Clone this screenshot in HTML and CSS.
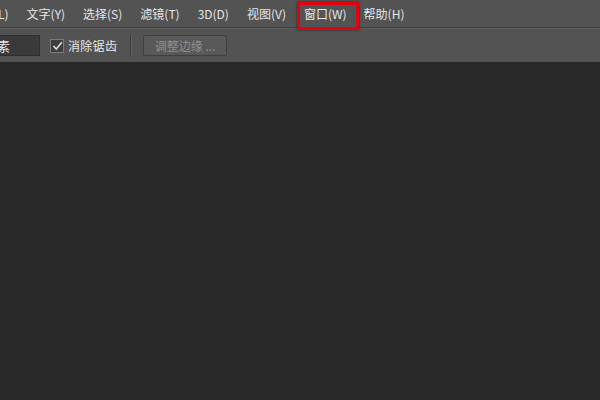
FILE: index.html
```html
<!DOCTYPE html>
<html lang="zh">
<head>
  <meta charset="UTF-8">
  <title>窗口菜单</title>
  <link rel="stylesheet" href="styles.css">
</head>
<body>
  <div class="menubar">
    <span class="menu-item first">L)</span>
    <span class="menu-item">文字(Y)</span>
    <span class="menu-item">选择(S)</span>
    <span class="menu-item">滤镜(T)</span>
    <span class="menu-item">3D(D)</span>
    <span class="menu-item">视图(V)</span>
    <span class="menu-item marked">窗口(W)</span>
    <span class="menu-item after-mark">帮助(H)</span>
  </div>

  <div class="toolbar">
    <div class="field">素</div>
    <label class="check">
      <span class="box">
        <svg width="11" height="10" viewBox="0 0 11 10"><path d="M1.5 5 L4.3 8 L9.8 1.2" fill="none" stroke="#dcdcdc" stroke-width="1.6"/></svg>
      </span>
      消除锯齿
    </label>
    <div class="divider"></div>
    <button class="edge-btn" disabled>调整边缘 ...</button>
  </div>

  <div class="canvas"></div>
</body>
</html>
```

FILE: styles.css
```css
body {
  margin: 0;
  background: #282828;
  font-family: "Noto Sans CJK SC", "Liberation Sans", sans-serif;
  font-size: 12px;
  color: #e6e6e6;
  height: 400px;
  overflow: hidden;
}
.menubar {
  height: 28px;
  background: #535353;
  border-bottom: 1px solid #3e3e3e;
  display: flex;
  align-items: center;
  box-sizing: border-box;
}
.menu-item {
  margin-left: 18px;
  line-height: 28px;
  white-space: nowrap;
  position: relative;
}
.menu-item.first {
  margin-left: -2px;
}
.menu-item.after-mark {
  margin-left: 17px;
}
.menu-item.marked::after {
  content: '';
  position: absolute;
  left: -7px;
  right: -12px;
  top: 2px;
  bottom: -2px;
  border: 3px solid #e3000f;
  box-shadow: 0 0 2px rgba(0, 0, 0, 0.6);
}
.toolbar {
  height: 34px;
  background: #535353;
  border-top: 1px solid #5e5e5e;
  display: flex;
  align-items: center;
  box-sizing: border-box;
}
.field {
  width: 40px;
  height: 21px;
  box-sizing: border-box;
  background: #3a3a3a;
  border: 1px solid #2e2e2e;
  border-left: none;
  line-height: 19px;
  font-size: 13px;
  text-indent: -3px;
}
.check {
  display: flex;
  align-items: center;
  margin-left: 10px;
  gap: 4px;
  letter-spacing: 0.3px;
}
.box {
  width: 12px;
  height: 12px;
  border: 1px solid #7a7a7a;
  background: #3e3e3e;
  display: flex;
  align-items: center;
  justify-content: center;
}
.divider {
  width: 1px;
  height: 22px;
  background: #3a3a3a;
  border-right: 1px solid #606060;
  margin-left: 13px;
}
.edge-btn {
  margin-left: 11px;
  width: 84px;
  height: 21px;
  background: #595959;
  border: 1px solid #3f3f3f;
  border-radius: 2px;
  color: #8e8e8e;
  font-family: inherit;
  font-size: 12px;
  padding: 0;
}
.canvas {
  background: #282828;
}
```
